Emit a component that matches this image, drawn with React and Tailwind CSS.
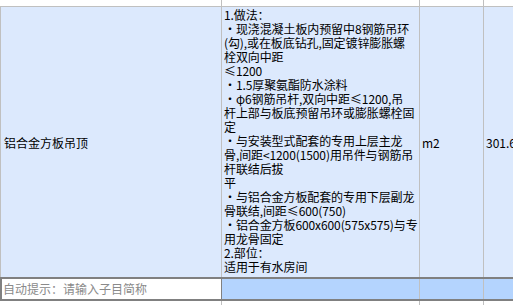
import React from 'react';

const lines = [
  '1.做法：',
  '・现浇混凝土板内预留中8钢筋吊环',
  '(勾),或在板底钻孔,固定镀锌膨胀螺',
  '栓双向中距',
  '≤1200',
  '・1.5厚聚氨酯防水涂料',
  '・φ6钢筋吊杆,双向中距≤1200,吊',
  '杆上部与板底预留吊环或膨胀螺栓固',
  '定',
  '・与安装型式配套的专用上层主龙',
  '骨,间距<1200(1500)用吊件与钢筋吊',
  '杆联结后拔',
  '平',
  '・与铝合金方板配套的专用下层副龙',
  '骨联结,间距≤600(750)',
  '・铝合金方板600x600(575x575)与专',
  '用龙骨固定',
  '2.部位：',
  '适用于有水房间',
];

const font = { fontFamily: '"Noto Sans CJK SC", "Noto Sans", sans-serif' };

export default function App() {
  return (
    <div className="w-[513px] h-[305px] overflow-hidden bg-white text-[12px] text-black" style={font}>
      {/* 上一行 */}
      <div className="flex h-[7px] border-b border-[#c0c0c0]">
        <div className="w-[222px] border-r border-[#c0c0c0]" />
        <div className="w-[198px] border-r border-[#c0c0c0]" />
        <div className="w-[64px] border-r border-[#c0c0c0]" />
        <div className="flex-1" />
      </div>

      {/* 子目行 */}
      <div className="flex h-[270px] bg-[#dce9fd]">
        <div className="w-[222px] border-l border-r border-[#c0c0c0] flex items-center pl-[3px] pt-[1px] leading-[14px]">
          铝合金方板吊顶
        </div>
        <div className="w-[198px] border-r border-[#c0c0c0] pl-[2px] pt-[1px] leading-[14px] whitespace-nowrap overflow-hidden tracking-[-0.1px]">
          {lines.map((l, i) => (
            <div key={i}>{l}</div>
          ))}
        </div>
        <div className="w-[64px] border-r border-[#c0c0c0] flex items-center pl-[2px] pt-[1px] leading-[14px]">m2</div>
        <div className="flex-1 flex items-center pl-[2px] pt-[1px] leading-[14px] whitespace-nowrap overflow-hidden">301.6</div>
      </div>

      {/* 当前编辑行 */}
      <div className="flex h-[24px] border-y-2 border-[#808080] bg-[#b4d4fe]">
        <div className="w-[222px] bg-white border-l-2 border-r border-[#808080] flex items-center pl-[1px] text-[#8a8a8a] leading-[14px]">
          自动提示：请输入子目简称
        </div>
        <div className="w-[198px] border-r border-[#c0c0c0]" />
        <div className="w-[64px] border-r border-[#c0c0c0]" />
        <div className="flex-1" />
      </div>

      {/* 下一行 */}
      <div className="flex h-[8px]">
        <div className="w-[222px] border-r border-[#c0c0c0]" />
        <div className="w-[198px] border-r border-[#c0c0c0]" />
        <div className="w-[64px] border-r border-[#c0c0c0]" />
        <div className="flex-1" />
      </div>
    </div>
  );
}
